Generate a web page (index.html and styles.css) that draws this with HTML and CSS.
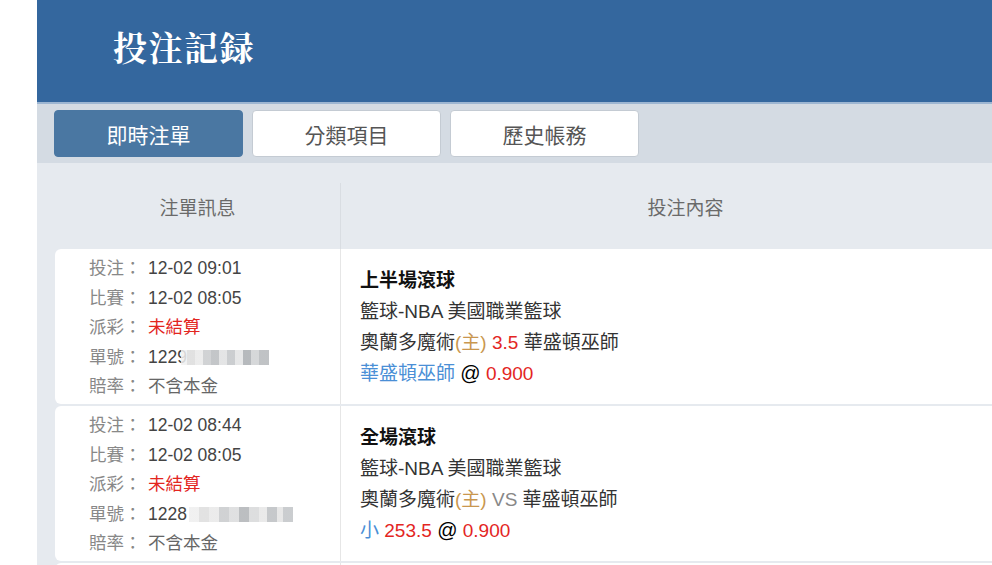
FILE: index.html
```html
<!DOCTYPE html>
<html lang="zh-Hant">
<head>
    <meta charset="UTF-8">
    <meta name="viewport" content="width=device-width, initial-scale=1.0">
    <link rel="stylesheet" href="styles.css">
    <title>投注記録</title>
</head>
<body>
    <div class="page">
        <div class="header">
            <h1>投注記録</h1>
        </div>

        <div class="tabs">
            <div class="tab active">即時注單</div>
            <div class="tab">分類項目</div>
            <div class="tab">歷史帳務</div>
        </div>

        <div class="list">
            <div class="list-head">
                <div class="head-cell">注單訊息</div>
                <div class="head-cell content">投注內容</div>
            </div>

            <div class="row">
                <div class="info">
                    <div><span class="label">投注：</span><span class="val">12-02 09:01</span></div>
                    <div><span class="label">比賽：</span><span class="val">12-02 08:05</span></div>
                    <div><span class="label">派彩：</span><span class="red">未結算</span></div>
                    <div><span class="label">單號：</span><span class="val">1229</span><span class="mosaic m1"></span></div>
                    <div><span class="label">賠率：</span><span class="muted">不含本金</span></div>
                </div>
                <div class="detail">
                    <div class="title">上半場滾球</div>
                    <div>籃球-NBA 美國職業籃球</div>
                    <div>奧蘭多魔術<span class="home">(主)</span> <span class="red">3.5</span> 華盛頓巫師</div>
                    <div><span class="blue">華盛頓巫師</span> <span class="at">@</span> <span class="red">0.900</span></div>
                </div>
            </div>

            <div class="row">
                <div class="info">
                    <div><span class="label">投注：</span><span class="val">12-02 08:44</span></div>
                    <div><span class="label">比賽：</span><span class="val">12-02 08:05</span></div>
                    <div><span class="label">派彩：</span><span class="red">未結算</span></div>
                    <div><span class="label">單號：</span><span class="val">1228</span><span class="mosaic m2"></span></div>
                    <div><span class="label">賠率：</span><span class="muted">不含本金</span></div>
                </div>
                <div class="detail">
                    <div class="title">全場滾球</div>
                    <div>籃球-NBA 美國職業籃球</div>
                    <div>奧蘭多魔術<span class="home">(主)</span> <span class="vs">VS</span> 華盛頓巫師</div>
                    <div><span class="blue">小</span> <span class="red">253.5</span> <span class="at">@</span> <span class="red">0.900</span></div>
                </div>
            </div>

            <!-- next bet, only its top edge is in view -->
            <div class="row">
                <div class="info"></div>
                <div class="detail"></div>
            </div>
        </div>
    </div>
</body>
</html>
```

FILE: styles.css
```css
body {
    margin: 0;
    background-color: #fff;
    font-family: "Liberation Sans", "Noto Sans CJK TC", sans-serif;
}

.page {
    margin-left: 37px;
    height: 565px;
    overflow: hidden;
}

.header {
    height: 104px;
    box-sizing: border-box;
    padding: 0 0 10px 76px;
    display: flex;
    align-items: center;
    background-color: #34679e;
    border-bottom: 2px solid #9db6d2;
}

.header h1 {
    margin: 0;
    color: #fff;
    font-family: "Noto Serif CJK TC", "Noto Sans CJK TC", serif;
    font-size: 34px;
    font-weight: 700;
    letter-spacing: 1.5px;
}

.tabs {
    display: flex;
    gap: 9px;
    padding: 6px 17px;
    background-color: #d4dbe3;
}

.tab {
    width: 189px;
    height: 47px;
    box-sizing: border-box;
    display: flex;
    align-items: center;
    justify-content: center;
    font-size: 21px;
    color: #555;
    background-color: #fff;
    border: 1px solid #c4cbd3;
    border-radius: 4px;
}

.tab.active {
    background-color: #4a77a2;
    border-color: #4a77a2;
    color: #fff;
}

.list {
    background-color: #e6eaef;
    padding-left: 18px;
    width: 975px;
}

.list-head {
    display: grid;
    grid-template-columns: 285px 1fr;
    height: 86px;
}

.head-cell {
    display: flex;
    align-items: center;
    justify-content: center;
    font-size: 19px;
    color: #6a6a6a;
}

.head-cell.content {
    margin-top: 20px;
    padding-bottom: 20px;
    border-left: 1px solid #d9dde2;
}

.row {
    display: grid;
    grid-template-columns: 285px 1fr;
    height: 155px;
    margin-bottom: 2px;
}

.info {
    background-color: #fff;
    border-radius: 6px 0 0 6px;
    padding: 5px 0 0 34px;
    font-size: 17.5px;
    line-height: 29.5px;
    color: #444;
}

.label {
    display: inline-block;
    width: 59px;
    color: #888;
}

.muted {
    color: #666;
}

.red {
    color: #e3261f;
}

.at {
    color: #000;
    font-size: 20px;
}

.mosaic {
    display: inline-block;
    height: 15px;
    vertical-align: -2px;
    opacity: 0.85;
}

.m1 {
    width: 88px;
    margin-left: -6px;
    background: linear-gradient(90deg, #f0f0f0 0 6px, #dcdcdc 6px 14px, #e9e9e9 14px 22px, #c9cbcd 22px 30px, #b9bcbf 30px 38px, #dfe0e1 38px 46px, #c2c5c8 46px 54px, #e2e3e4 54px 62px, #a9adb1 62px 70px, #cfd1d3 70px 78px, #b5b8bb 78px 88px);
}

.m2 {
    width: 104px;
    margin-left: 2px;
    background: linear-gradient(90deg, #eeeeee 0 10px, #dddddd 10px 20px, #e8e8e8 20px 30px, #c8cacc 30px 40px, #dadbdc 40px 50px, #b0b3b6 50px 60px, #d7d8d9 60px 70px, #e6e6e6 70px 78px, #bcbfc2 78px 88px, #e3e3e3 88px 94px, #c1c4c7 94px 104px);
}

.detail {
    background-color: #fff;
    border-left: 1px solid #e6e6e6;
    padding-left: 19px;
    display: flex;
    flex-direction: column;
    justify-content: center;
    font-size: 19px;
    line-height: 31px;
    color: #333;
}

.title {
    font-weight: 700;
    color: #111;
}

.home {
    color: #c9974f;
}

.vs {
    color: #888;
}

.blue {
    color: #4a8fd6;
}
```
